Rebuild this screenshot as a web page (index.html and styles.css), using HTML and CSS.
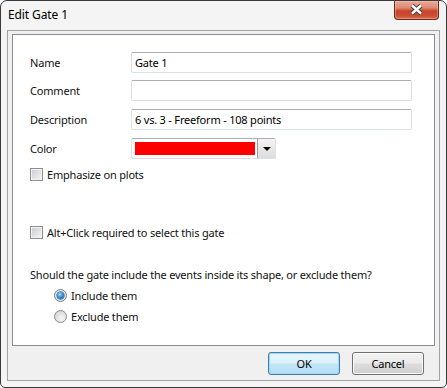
FILE: index.html
```html
<!DOCTYPE html>
<html>
<head>
<meta charset="utf-8">
<link rel="stylesheet" href="styles.css">
</head>
<body>
<div class="window">
  <div class="titlebar">
    <span class="title">Edit Gate 1</span>
    <div class="close">
      <svg width="15" height="11" viewBox="0 0 15 11">
        <path d="M3 1.5 L12 9.5 M12 1.5 L3 9.5" stroke="#3f3f3f" stroke-width="4.4" fill="none"/>
        <path d="M3 1.5 L12 9.5 M12 1.5 L3 9.5" stroke="#ffffff" stroke-width="2.4" fill="none"/>
      </svg>
    </div>
  </div>
  <div class="client">
    <div class="panel">
      <div class="fields">
        <div class="row"><span class="label">Name</span><div class="input">Gate 1</div></div>
        <div class="row r-comment"><span class="label">Comment</span><div class="input"></div></div>
        <div class="row r-desc"><span class="label">Description</span><div class="input">6 vs. 3 - Freeform - 108 points</div></div>
        <div class="row r-color"><span class="label">Color</span>
          <div class="combo">
            <div class="swatch-wrap"><div class="swatch"></div></div>
            <div class="drop"><span class="tri"></span></div>
          </div>
        </div>
      </div>
      <div class="check-row emph"><span class="check"></span><span>Emphasize on plots</span></div>
      <div class="check-row alt"><span class="check"></span><span>Alt+Click required to select this gate</span></div>
      <div class="question">Should the gate include the events inside its shape, or exclude them?</div>
      <div class="radio-row r1"><span class="radio on"><span class="dot"></span></span><span>Include them</span></div>
      <div class="radio-row r2"><span class="radio"></span><span>Exclude them</span></div>
    </div>
    <div class="buttons">
      <div class="btn ok">OK</div>
      <div class="btn cancel">Cancel</div>
    </div>
  </div>
</div>
</body>
</html>
```
FILE: styles.css
```css
html, body {
  margin: 0;
  padding: 0;
  background: #ffffff;
}
body {
  font-family: "Noto Sans", "Open Sans", sans-serif;
  font-size: 11px;
  letter-spacing: -0.2px;
  color: #111111;
}
.window {
  width: 447px;
  height: 388px;
  box-sizing: border-box;
  border: 1px solid #3a3a3a;
  border-radius: 7px 7px 5px 5px;
  background: #f4f4f4;
  display: flex;
  flex-direction: column;
  overflow: hidden;
}
.titlebar {
  height: 29px;
  display: flex;
  align-items: flex-start;
  justify-content: space-between;
  flex: none;
}
.title {
  font-size: 12px;
  letter-spacing: -0.1px;
  color: #000;
  padding-left: 7px;
  line-height: 28px;
}
.close {
  width: 45px;
  height: 19px;
  box-sizing: border-box;
  margin-right: 7px;
  border: 1px solid #6e2a1c;
  border-top: none;
  border-radius: 0 0 4px 4px;
  background: linear-gradient(#eba99a 0%, #dd8a72 38%, #c8432a 56%, #cc4f33 82%, #d8704f 100%);
  box-shadow: inset 0 0 0 1px rgba(255, 215, 195, 0.35);
  display: flex;
  align-items: center;
  justify-content: center;
}
.close svg { display: block; margin-top: -1px; }
.client {
  flex: 1;
  margin: 0 6px 6px 6px;
  border: 1px solid #a3a3a3;
  background: #f0f0f0;
  display: flex;
  flex-direction: column;
  padding: 3px 4px 0 4px;
}
.panel {
  height: 312px;
  box-sizing: border-box;
  border: 1px solid #898c95;
  background: #ffffff;
  padding: 17px 0 0 17px;
  display: flex;
  flex-direction: column;
}
.fields {
  display: flex;
  flex-direction: column;
}
.row {
  display: flex;
  align-items: center;
  height: 21px;
}
.r-comment { margin-top: 7px; }
.r-desc { margin-top: 8px; }
.r-color { margin-top: 8px; }
.label {
  width: 101px;
  flex: none;
}
.input {
  width: 281px;
  height: 21px;
  box-sizing: border-box;
  border: 1px solid #dbdfe6;
  border-top-color: #abadb3;
  border-radius: 2px;
  padding: 0 3px;
  line-height: 19px;
  color: #000;
  background: #fff;
}
.combo {
  width: 145px;
  height: 21px;
  box-sizing: border-box;
  border: 1px solid #dbdfe6;
  border-top-color: #abadb3;
  border-radius: 2px;
  display: flex;
  background: #fff;
}
.swatch-wrap {
  flex: 1;
  padding: 3px 2px 3px 3px;
}
.swatch {
  width: 120px;
  height: 13px;
  background: #ff0000;
}
.drop {
  width: 17px;
  border-left: 1px solid #9a9a9a;
  background: linear-gradient(#f4f4f4, #dcdcdc);
  display: flex;
  align-items: center;
  justify-content: center;
}
.tri {
  width: 0;
  height: 0;
  border-left: 4px solid transparent;
  border-right: 4px solid transparent;
  border-top: 4px solid #000;
  margin-top: 1px;
}
.check-row, .radio-row {
  display: flex;
  align-items: center;
  height: 16px;
  gap: 4px;
}
.emph { margin-top: 7px; }
.alt { margin-top: 42px; }
.check {
  width: 13px;
  height: 13px;
  box-sizing: border-box;
  border: 1px solid #8e8f8f;
  background: linear-gradient(135deg, #cbcbcb, #f6f6f6);
  box-shadow: inset 0 0 0 1px #f4f4f4;
  flex: none;
}
.question {
  margin-top: 27px;
  height: 16px;
  line-height: 16px;
}
.radio-row { padding-left: 24px; }
.r1 { margin-top: 4px; }
.r2 { margin-top: 5px; }
.radio {
  width: 13px;
  height: 13px;
  box-sizing: border-box;
  border-radius: 50%;
  border: 1px solid #8c8c8c;
  background: radial-gradient(circle at 60% 65%, #f8f8f8 0%, #d8d8d8 70%, #c4c4c4 100%);
  display: flex;
  align-items: center;
  justify-content: center;
  flex: none;
}
.radio.on { border-color: #6b7f90; background: radial-gradient(circle, #f4f4f4 0%, #e2e2e2 100%); }
.dot {
  width: 7px;
  height: 7px;
  border-radius: 50%;
  background: radial-gradient(circle at 40% 35%, #a8e0ff 0%, #3b9ad8 40%, #0f4f8c 100%);
  box-shadow: 0 0 0 0.5px #1c3f66;
}
.buttons {
  flex: 1;
  display: flex;
  justify-content: flex-end;
  gap: 12px;
  padding: 6px 11px 0 0;
}
.btn {
  width: 72px;
  height: 23px;
  box-sizing: border-box;
  border-radius: 3px;
  text-align: center;
  line-height: 21px;
  color: #000;
}
.ok {
  border: 1px solid #3c7fb1;
  background: linear-gradient(#eaf6fd 0%, #d9f0fc 48%, #c2e5f8 52%, #b6ddf4 100%);
  box-shadow: inset 0 0 0 1px #9fd5f5;
}
.cancel {
  border: 1px solid #707070;
  background: linear-gradient(#f2f2f2 0%, #ebebeb 48%, #dddddd 52%, #cfcfcf 100%);
  box-shadow: inset 0 0 0 1px #fcfcfc;
}
```
